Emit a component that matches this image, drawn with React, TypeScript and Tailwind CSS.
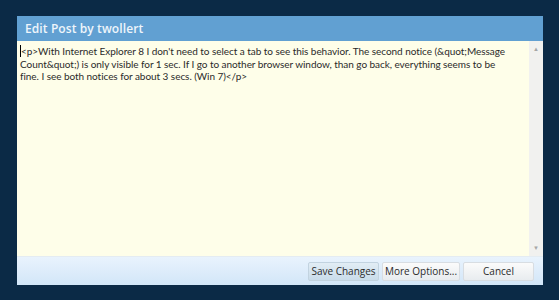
import React from 'react';

const postLines = [
  "<p>With Internet Explorer 8 I don't need to select a tab to see this behavior. The second notice (&quot;Message",
  'Count&quot;) is only visible for 1 sec. If I go to another browser window, than go back, everything seems to be',
  'fine. I see both notices for about 3 secs. (Win 7)</p>',
];

export default function App() {
  return (
    <div className="w-[559px] h-[300px] bg-[#0b2a46] pt-4 pl-[17px] font-['Open_Sans',sans-serif]">
      <div className="w-[526px] flex flex-col">
        {/* Title bar */}
        <div className="h-[25px] bg-[#61a0d2] flex items-center pl-2">
          <span className="text-[12px] font-semibold text-[#eef5fb] tracking-[0.1px]">Edit Post by twollert</span>
        </div>

        {/* Editor */}
        <div className="h-[216px] flex bg-[#fefee9] border-b border-[#e4ecf2]">
          <div className="flex-1 min-w-0 overflow-hidden pl-[3px] pt-[4px] font-['Lato',sans-serif] text-[10px] leading-[12.5px] tracking-[-0.05px] text-[#2a2a2a]">
            {postLines.map((line, i) => (
              <div key={i} className="whitespace-nowrap">
                {i === 0 ? <span className="border-l border-black">{line}</span> : line}
              </div>
            ))}
          </div>
          <div className="w-[14px] shrink-0 bg-[#f1f1ef] flex flex-col justify-between items-center py-[5px]">
            <span className="text-[6px] leading-none text-[#a6a6a6]">▲</span>
            <span className="text-[6px] leading-none text-[#a6a6a6]">▼</span>
          </div>
        </div>

        {/* Footer */}
        <div className="h-[28px] bg-gradient-to-b from-[#e9f3fd] to-[#d2e6f8] flex items-center justify-end gap-[3px] pr-[9px]">
          <button className="w-[71px] h-[19px] bg-gradient-to-b from-[#e2edf5] to-[#c9dcea] border border-[#c2d3e0] text-[10px] text-[#2b2b2b] rounded-[2px]">
            Save Changes
          </button>
          <button className="w-[78px] h-[19px] bg-gradient-to-b from-[#fbfbfb] to-[#e8ecef] border border-[#d8dde2] text-[10px] text-[#2b2b2b] rounded-[2px]">
            More Options...
          </button>
          <button className="w-[71px] h-[19px] bg-gradient-to-b from-[#fbfbfb] to-[#e8ecef] border border-[#d8dde2] text-[10px] text-[#2b2b2b] rounded-[2px]">
            Cancel
          </button>
        </div>
      </div>
    </div>
  );
}
